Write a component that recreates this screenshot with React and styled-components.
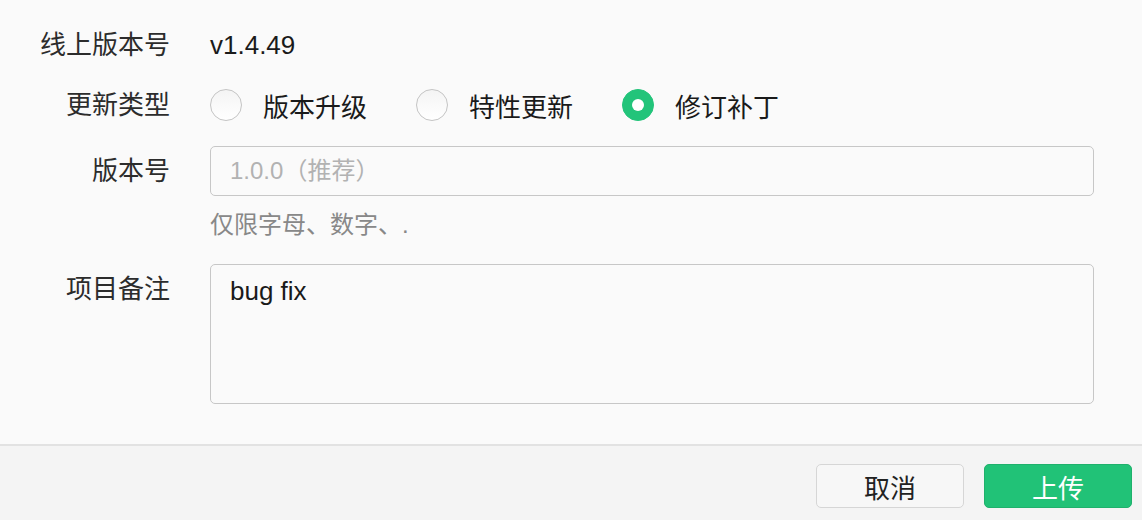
import React from 'react'
import styled, { createGlobalStyle } from 'styled-components'

const GlobalStyle = createGlobalStyle`
    html, body {
        margin: 0;
        padding: 0;
        background: #fafafa;
    }
    body {
        font-family: "Liberation Sans", "Noto Sans CJK SC", sans-serif;
        color: #222;
    }
`

const types = [
    { id: 'major', title: '版本升级' },
    { id: 'feature', title: '特性更新' },
    { id: 'patch', title: '修订补丁' },
]

function App() {
    const active = 'patch'
    return (
        <Dialog>
            <GlobalStyle />
            <Form>
                <Row $mt={20}>
                    <Label>线上版本号</Label>
                    <Value>v1.4.49</Value>
                </Row>
                <Row $mt={10}>
                    <Label>更新类型</Label>
                    <RadioGroup>
                        {types.map((item) => (
                            <RadioItem key={item.id}>
                                <Radio $checked={active === item.id} />
                                <span>{item.title}</span>
                            </RadioItem>
                        ))}
                    </RadioGroup>
                </Row>
                <Row $mt={16}>
                    <Label>版本号</Label>
                    <Field>
                        <Input placeholder="1.0.0（推荐）" readOnly />
                        <Hint>仅限字母、数字、.</Hint>
                    </Field>
                </Row>
                <Row $mt={24}>
                    <Label>项目备注</Label>
                    <TextArea defaultValue="bug fix" />
                </Row>
            </Form>
            <Footer>
                <Button>取消</Button>
                <Button $primary>上传</Button>
            </Footer>
        </Dialog>
    )
}

const Dialog = styled.div`
    width: 1142px;
    height: 520px;
    display: flex;
    flex-direction: column;
    background: #fafafa;
    overflow: hidden;
`

const Form = styled.div`
    flex: 1;
    display: flex;
    flex-direction: column;
    padding-right: 48px;
`

const Row = styled.div`
    display: flex;
    align-items: flex-start;
    gap: 40px;
    margin-top: ${(p) => p.$mt || 0}px;
`

const Label = styled.div`
    width: 170px;
    flex-shrink: 0;
    text-align: right;
    font-size: 26px;
    line-height: 50px;
    color: #2c2c2c;
`

const Value = styled.div`
    font-size: 26px;
    line-height: 50px;
    color: #1a1a1a;
`

const RadioGroup = styled.div`
    display: flex;
    align-items: center;
    gap: 49px;
    height: 50px;
`

const RadioItem = styled.label`
    display: flex;
    align-items: center;
    gap: 21px;
    font-size: 26px;
    color: #1a1a1a;
`

const Radio = styled.span`
    width: 32px;
    height: 32px;
    box-sizing: border-box;
    border-radius: 50%;
    position: relative;
    background: ${(p) => (p.$checked ? '#22c47a' : 'linear-gradient(#f4f4f4, #ffffff)')};
    border: 1px solid ${(p) => (p.$checked ? '#22c47a' : '#c4c4c4')};
    &::after {
        content: "";
        display: ${(p) => (p.$checked ? 'block' : 'none')};
        position: absolute;
        left: 50%;
        top: 50%;
        width: 12px;
        height: 12px;
        margin: -6px 0 0 -6px;
        border-radius: 50%;
        background: #fff;
    }
`

const Field = styled.div`
    flex: 1;
    display: flex;
    flex-direction: column;
`

const Input = styled.input`
    height: 50px;
    box-sizing: border-box;
    border: 1px solid #c7c7c7;
    border-radius: 5px;
    background: #fafafa;
    padding: 0 19px;
    font-family: inherit;
    font-size: 24px;
    color: #1a1a1a;
    outline: none;
    &::placeholder {
        color: #b2b2b2;
    }
`

const Hint = styled.div`
    margin-top: 14px;
    font-size: 24px;
    line-height: 30px;
    color: #888;
`

const TextArea = styled.textarea`
    flex: 1;
    height: 140px;
    box-sizing: border-box;
    border: 1px solid #c7c7c7;
    border-radius: 5px;
    background: #fafafa;
    padding: 13px 19px;
    font-family: inherit;
    font-size: 26px;
    line-height: 26px;
    color: #1a1a1a;
    resize: none;
    outline: none;
`

const Footer = styled.div`
    height: 76px;
    box-sizing: border-box;
    border-top: 2px solid #e2e2e2;
    background: #f4f4f4;
    display: flex;
    justify-content: flex-end;
    align-items: flex-start;
    gap: 20px;
    padding: 18px 10px 0 0;
`

const Button = styled.button`
    width: 148px;
    height: 44px;
    border-radius: 5px;
    font-family: inherit;
    font-size: 26px;
    cursor: pointer;
    border: 1px solid ${(p) => (p.$primary ? '#1fb16c' : '#d6d6d6')};
    background: ${(p) => (p.$primary ? '#21c277' : '#f7f7f7')};
    color: ${(p) => (p.$primary ? '#fff' : '#222')};
`

export default App
